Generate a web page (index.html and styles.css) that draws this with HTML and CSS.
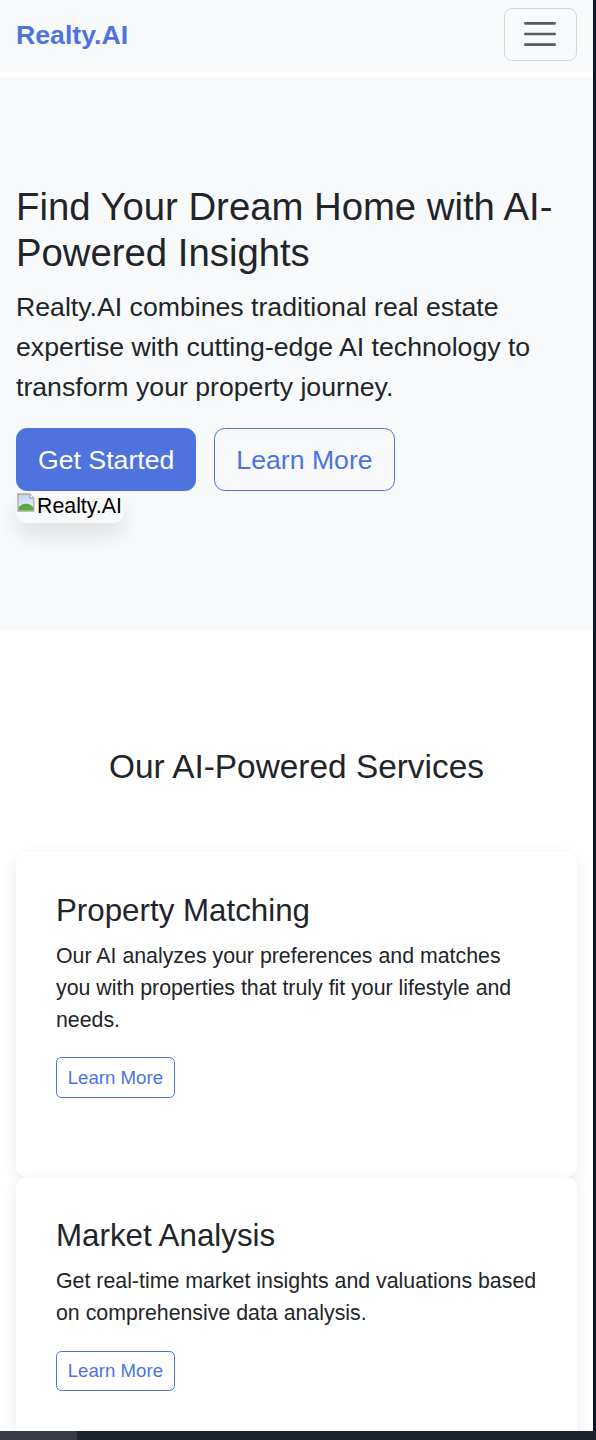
FILE: index.html
```html
<!DOCTYPE html>
<html lang="en">
<head>
<meta charset="utf-8">
<title>Realty.AI</title>
<link rel="stylesheet" href="styles.css">
</head>
<body>
<div class="frame">
  <div class="viewport">
    <nav class="navbar">
      <a class="brand" href="#">Realty.AI</a>
      <button class="toggler" type="button" aria-label="Toggle navigation">
        <svg class="toggler-icon" viewBox="0 0 30 30" width="40" height="40" aria-hidden="true">
          <path d="M4 7h22M4 15h22M4 23h22" stroke="rgba(33,37,41,0.75)" stroke-width="2" stroke-linecap="round" stroke-miterlimit="10" fill="none"/>
        </svg>
      </button>
    </nav>

    <section class="hero">
      <h1 class="hero-title">Find Your Dream Home with AI-Powered Insights</h1>
      <p class="lead">Realty.AI combines traditional real estate expertise with cutting-edge AI technology to transform your property journey.</p>
      <div class="actions">
        <a class="btn btn-lg btn-primary" href="#">Get Started</a>
        <a class="btn btn-lg btn-outline" href="#">Learn More</a>
      </div>
      <div class="broken-img">
        <svg class="broken-icon" viewBox="0 0 16 16" width="21" height="21" aria-hidden="true">
          <defs>
            <linearGradient id="sky" x1="0" y1="0" x2="0" y2="1">
              <stop offset="0" stop-color="#bcd6f2"/>
              <stop offset="1" stop-color="#e8f1fb"/>
            </linearGradient>
          </defs>
          <path d="M1.5 1.5h9l3 3v10h-12z" fill="url(#sky)" stroke="#a9a9a9" stroke-width="1"/>
          <path d="M10.5 1.5v3h3" fill="#fff" stroke="#a9a9a9" stroke-width="1"/>
          <path d="M2 14V11.5c2-2 4-3 6.5-2.5 2 .4 3.5 1.5 4.5 2.5V14z" fill="#5fa83f"/>
        </svg><span>Realty.AI</span>
      </div>
    </section>

    <section class="services">
      <h2 class="section-title">Our AI-Powered Services</h2>
      <div class="cards">
        <div class="card">
          <h3 class="card-title">Property Matching</h3>
          <p class="card-text">Our AI analyzes your preferences and matches you with properties that truly fit your lifestyle and needs.</p>
          <a class="btn btn-sm btn-outline" href="#">Learn More</a>
        </div>
        <div class="card">
          <h3 class="card-title">Market Analysis</h3>
          <p class="card-text">Get real-time market insights and valuations based on comprehensive data analysis.</p>
          <a class="btn btn-sm btn-outline" href="#">Learn More</a>
        </div>
      </div>
    </section>
  </div>
  <div class="edge"></div>
  <div class="taskbar"><span class="taskbar-tab"></span></div>
</div>
</body>
</html>
```

FILE: styles.css
```css
* { box-sizing: border-box; }

html, body {
  margin: 0;
  padding: 0;
  background: #0f1526;
}

body {
  font-family: "Liberation Sans", Arial, Helvetica, sans-serif;
  color: #212529;
  font-size: 21.33px;
  line-height: 1.5;
}

.frame {
  display: grid;
  grid-template-columns: 593px 3px;
  grid-template-rows: 1431px 9px;
  width: 596px;
  height: 1440px;
  overflow: hidden;
}

.viewport {
  background: #ffffff;
  overflow: hidden;
}

.edge {
  background: #0f1526;
}

.taskbar {
  grid-column: 1 / 3;
  background: #20242d;
  display: flex;
}

.taskbar-tab {
  width: 77px;
  background: #393c46;
}

/* Navbar */
.navbar {
  display: flex;
  justify-content: space-between;
  align-items: center;
  padding: 8px 16px 10.67px;
  background: #f8f9fa;
}

.brand {
  font-size: 26.67px;
  font-weight: 700;
  line-height: 40px;
  color: #4e73df;
  text-decoration: none;
}

.toggler {
  display: flex;
  align-items: center;
  justify-content: center;
  width: 73.5px;
  height: 53px;
  padding: 0;
  background: transparent;
  border: 1px solid rgba(0, 0, 0, 0.14);
  border-radius: 8px;
}

.toggler-icon { display: block; margin-top: -1px; }

/* Hero */
.hero {
  margin-top: 5px;
  padding: 107.5px 16px 107px;
  background: #f8f9fa;
}

.hero-title {
  margin: 0 0 10.67px;
  font-size: 38.3px;
  font-weight: 500;
  line-height: 1.2;
}

.lead {
  margin: 0 0 21.33px;
  font-size: 26.67px;
  line-height: 40px;
  font-weight: 400;
}

.actions {
  display: flex;
  gap: 18px;
}

.btn {
  display: inline-block;
  text-decoration: none;
  text-align: center;
  border: 1.33px solid #4e73df;
  white-space: nowrap;
}

.btn-lg {
  font-size: 26.67px;
  line-height: 40px;
  padding: 10.5px 21px;
  border-radius: 10.67px;
}

.btn-sm {
  font-size: 18.67px;
  line-height: 28px;
  padding: 5.33px 10.67px;
  border-radius: 5.33px;
}

.btn-primary {
  background: #4e73df;
  color: #ffffff;
}

.btn-outline {
  background: transparent;
  color: #4e73df;
}

.broken-img {
  display: inline-flex;
  align-items: flex-start;
  height: 32px;
  padding-right: 2px;
  border-radius: 10px;
  box-shadow: 0 12px 24px rgba(0, 0, 0, 0.1);
  font-size: 21.33px;
  line-height: 30px;
  color: #000000;
}

.broken-icon {
  display: block;
  margin-top: 1px;
}

/* Services */
.services {
  padding: 117px 0 80px;
}

.section-title {
  margin: 0 0 64.7px;
  text-align: center;
  font-size: 33.4px;
  font-weight: 500;
  line-height: 1.2;
}

.cards {
  display: flex;
  flex-direction: column;
  gap: 0;
  padding: 0 16px;
}

.card {
  background: #ffffff;
  border-radius: 10.67px;
  box-shadow: 0 4px 16px rgba(0, 0, 0, 0.08);
  padding: 40px 40px 79px;
}

.card-title {
  margin: 0 0 10.67px;
  font-size: 31.3px;
  font-weight: 500;
  line-height: 1.2;
}

.card-text {
  margin: 0 0 21.33px;
  font-size: 21.33px;
  line-height: 32px;
}
```
